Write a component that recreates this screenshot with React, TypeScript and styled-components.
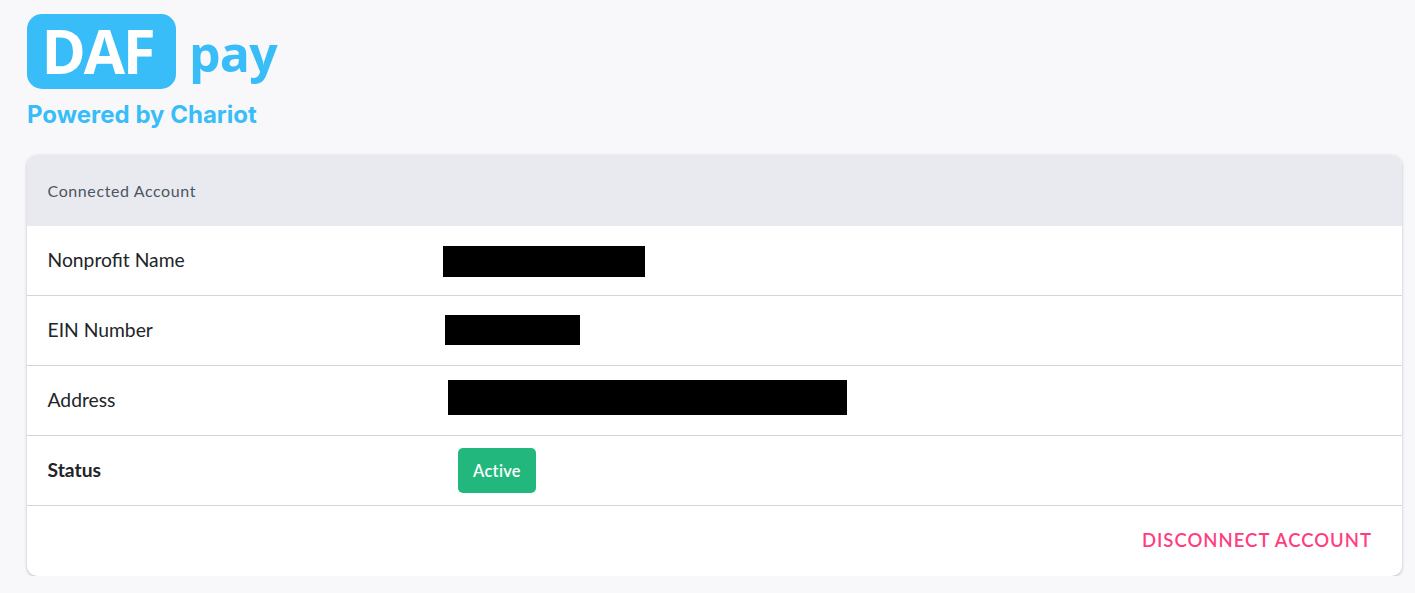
import { FC } from 'react'
import styled, { createGlobalStyle } from 'styled-components'

const GlobalStyle = createGlobalStyle`
  html, body {
    margin: 0;
    padding: 0;
    background: #f8f8fb;
    font-family: Lato, 'Liberation Sans', sans-serif;
  }
`

const Page = styled.div`
  padding: 14px 13px 0 27px;
`

const Logo = styled.div`
  display: flex;
  flex-direction: column;
  color: #38bdf8;
`
const LogoTop = styled.div`
  display: flex;
  align-items: flex-start;
`
const LogoBadge = styled.div`
  display: flex;
  align-items: center;
  justify-content: center;
  width: 149px;
  height: 75px;
  padding-right: 8px;
  box-sizing: border-box;
  border-radius: 15px;
  background: #38bdf8;
  color: #fff;
  font-family: 'Open Sans', sans-serif;
  font-weight: 700;
  font-size: 60px;
  line-height: 75px;
  letter-spacing: -2.2px;
`
const LogoPay = styled.div`
  margin: 9px 0 0 13px;
  font-family: 'Open Sans', sans-serif;
  font-weight: 700;
  font-size: 50px;
  line-height: 60px;
  letter-spacing: -0.8px;
`
const Powered = styled.div`
  margin-top: 12px;
  font-family: Inter, sans-serif;
  font-weight: 700;
  font-size: 24px;
  line-height: 28px;
`

const Card = styled.section`
  margin-top: 26px;
  overflow: hidden;
  border-radius: 10px;
  background: #fff;
  box-shadow: 0 1px 3px rgba(100, 105, 140, 0.45);
`
const CardHeader = styled.div`
  display: flex;
  align-items: center;
  height: 71px;
  padding-left: 20.5px;
  background: #e9eaef;
  color: #4b5563;
  font-size: 16px;
  letter-spacing: 0.6px;
`
const Row = styled.div`
  display: flex;
  align-items: center;
  height: 69px;
  padding-left: 20.5px;
  border-bottom: 1px solid #d2d3dc;
  color: #212529;
  font-size: 19.3px;
`
const Label = styled.div<{ $bold?: boolean }>`
  width: 395.5px;
  margin-top: -2px;
  font-weight: ${p => (p.$bold ? 700 : 400)};
`
const Redacted = styled.div<{ $width: number; $height: number; $offset: number; $shift?: number }>`
  width: ${p => p.$width}px;
  height: ${p => p.$height}px;
  margin-left: ${p => p.$offset}px;
  margin-top: ${p => p.$shift ?? 0}px;
  background: #000;
`
const StatusBadge = styled.div`
  display: flex;
  align-items: center;
  justify-content: center;
  width: 78px;
  height: 45px;
  margin-left: 15px;
  border-radius: 5px;
  background: #22b77c;
  color: #fff;
  font-weight: 600;
  font-size: 16.4px;
  letter-spacing: 0.3px;
`
const CardFooter = styled.div`
  display: flex;
  align-items: center;
  justify-content: flex-end;
  height: 70px;
  padding-right: 30px;
`
const DisconnectButton = styled.button`
  margin-top: -2px;
  padding: 0;
  border: 0;
  background: none;
  color: #ff3d7f;
  font-family: inherit;
  font-weight: 600;
  font-size: 18.5px;
  letter-spacing: 1px;
  cursor: pointer;
`

const App: FC = () => {
  return (
    <>
      <GlobalStyle />
      <Page>
        <Logo>
          <LogoTop>
            <LogoBadge>DAF</LogoBadge>
            <LogoPay>pay</LogoPay>
          </LogoTop>
          <Powered>Powered by Chariot</Powered>
        </Logo>

        <Card>
          <CardHeader>Connected Account</CardHeader>
          <Row>
            <Label>Nonprofit Name</Label>
            <Redacted $width={202} $height={31} $offset={0} $shift={2} />
          </Row>
          <Row>
            <Label>EIN Number</Label>
            <Redacted $width={135} $height={30} $offset={2} $shift={-2} />
          </Row>
          <Row>
            <Label>Address</Label>
            <Redacted $width={399} $height={35} $offset={5} $shift={-7} />
          </Row>
          <Row>
            <Label $bold>Status</Label>
            <StatusBadge>Active</StatusBadge>
          </Row>
          <CardFooter>
            <DisconnectButton>DISCONNECT ACCOUNT</DisconnectButton>
          </CardFooter>
        </Card>
      </Page>
    </>
  )
}

export default App
